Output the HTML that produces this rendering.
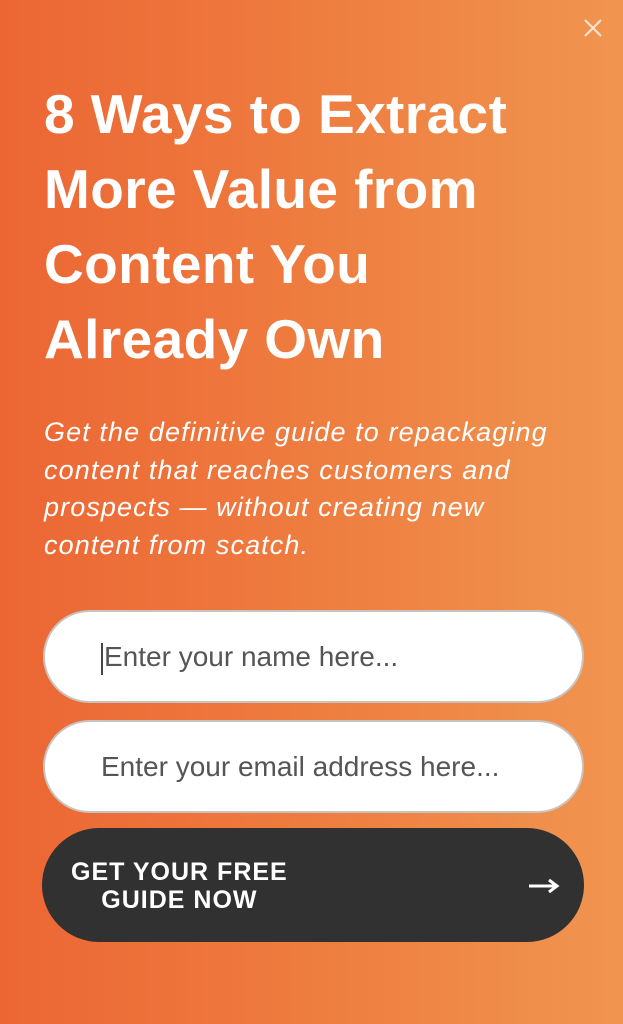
<!DOCTYPE html>
<html><head><style>
html,body{margin:0;padding:0}
body{width:623px;height:1024px;overflow:hidden;position:relative;background:linear-gradient(90deg,#ec6634 0%,#ee7a3e 45%,#f09550 100%);font-family:"Liberation Sans",sans-serif}
.x{position:absolute;left:582px;top:17px;width:22px;height:22px}
h1{position:absolute;left:44px;top:77px;margin:0;color:#fff;font-weight:bold;font-size:55px;line-height:75px;letter-spacing:0.4px}
p{position:absolute;left:44px;top:414px;margin:0;color:#fff;font-style:italic;font-size:27px;line-height:37.5px;width:580px;letter-spacing:1.1px;white-space:nowrap}
.in{position:absolute;left:43px;width:541px;height:93px;border-radius:47px;background:#fff;border:2px solid #c9c3bd;box-sizing:border-box;color:#555;font-size:28px;line-height:89px;padding-left:56px}
.btn{position:absolute;left:42px;top:828px;width:542px;height:114px;border-radius:57px;background:#313131;color:#fff;font-weight:bold;font-size:25px;letter-spacing:1px}
.btn .t{position:absolute;left:29px;top:30px;line-height:28px;text-align:center}
.cur{display:inline-block;width:2px;height:32px;background:#444;vertical-align:middle;margin-right:1px}
</style></head><body>
<svg class="x" viewBox="0 0 22 22"><path d="M3 3L19 19M19 3L3 19" stroke="#fbe3d3" stroke-width="2.2"/></svg>
<h1>8 Ways to Extract<br>More Value from<br>Content You<br>Already Own</h1>
<p>Get the definitive guide to repackaging<br>content that reaches customers and<br>prospects — without creating new<br>content from scatch.</p>
<div class="in" style="top:610px"><span class="cur"></span>Enter your name here...</div>
<div class="in" style="top:720px">Enter your email address here...</div>
<div class="btn"><div class="t">GET YOUR FREE<br>GUIDE NOW</div>
<svg style="position:absolute;left:486px;top:50px" width="32" height="16" viewBox="0 0 32 16"><path d="M1 8H28M21 2L29 8L21 14" stroke="#fff" stroke-width="3" fill="none"/></svg></div>
</body></html>
